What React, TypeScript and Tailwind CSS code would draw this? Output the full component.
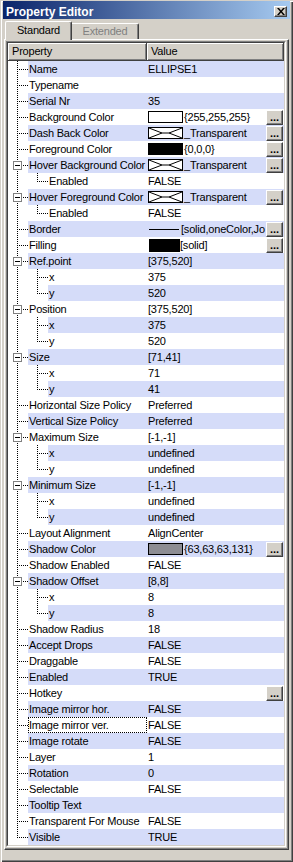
import React from "react";

type Kind = "white" | "black" | "none" | "line" | "fill" | "shadow";

type Item = {
  label: string;
  value?: string;
  child?: boolean;
  last?: boolean;
  expand?: boolean;
  swatch?: Kind;
  btn?: boolean;
  focus?: boolean;
};

const items: Item[] = [
  { label: "Name", value: "ELLIPSE1" },
  { label: "Typename", value: "" },
  { label: "Serial Nr", value: "35" },
  { label: "Background Color", swatch: "white", value: "{255,255,255}", btn: true },
  { label: "Dash Back Color", swatch: "none", value: "_Transparent", btn: true },
  { label: "Foreground Color", swatch: "black", value: "{0,0,0}", btn: true },
  { label: "Hover Background Color", swatch: "none", value: "_Transparent", btn: true, expand: true },
  { label: "Enabled", value: "FALSE", child: true, last: true },
  { label: "Hover Foreground Color", swatch: "none", value: "_Transparent", btn: true, expand: true },
  { label: "Enabled", value: "FALSE", child: true, last: true },
  { label: "Border", swatch: "line", value: "[solid,oneColor,Jo", btn: true },
  { label: "Filling", swatch: "fill", value: "[solid]", btn: true },
  { label: "Ref.point", value: "[375,520]", expand: true },
  { label: "x", value: "375", child: true },
  { label: "y", value: "520", child: true, last: true },
  { label: "Position", value: "[375,520]", expand: true },
  { label: "x", value: "375", child: true },
  { label: "y", value: "520", child: true, last: true },
  { label: "Size", value: "[71,41]", expand: true },
  { label: "x", value: "71", child: true },
  { label: "y", value: "41", child: true, last: true },
  { label: "Horizontal Size Policy", value: "Preferred" },
  { label: "Vertical Size Policy", value: "Preferred" },
  { label: "Maximum Size", value: "[-1,-1]", expand: true },
  { label: "x", value: "undefined", child: true },
  { label: "y", value: "undefined", child: true, last: true },
  { label: "Minimum Size", value: "[-1,-1]", expand: true },
  { label: "x", value: "undefined", child: true },
  { label: "y", value: "undefined", child: true, last: true },
  { label: "Layout Alignment", value: "AlignCenter" },
  { label: "Shadow Color", swatch: "shadow", value: "{63,63,63,131}", btn: true },
  { label: "Shadow Enabled", value: "FALSE" },
  { label: "Shadow Offset", value: "[8,8]", expand: true },
  { label: "x", value: "8", child: true },
  { label: "y", value: "8", child: true, last: true },
  { label: "Shadow Radius", value: "18" },
  { label: "Accept Drops", value: "FALSE" },
  { label: "Draggable", value: "FALSE" },
  { label: "Enabled", value: "TRUE" },
  { label: "Hotkey", value: "", btn: true },
  { label: "Image mirror hor.", value: "FALSE" },
  { label: "Image mirror ver.", value: "FALSE", focus: true },
  { label: "Image rotate", value: "FALSE" },
  { label: "Layer", value: "1" },
  { label: "Rotation", value: "0" },
  { label: "Selectable", value: "FALSE" },
  { label: "Tooltip Text", value: "" },
  { label: "Transparent For Mouse", value: "FALSE" },
  { label: "Visible", value: "TRUE" },
];

// dotted tree lines + expand box for one row
function Lines({ item, lastRow }: { item: Item; lastRow: boolean }) {
  const w = item.child ? 40 : 20;
  return (
    <svg width={w} height={16} className="block shrink-0" shapeRendering="crispEdges">
      <line x1={9.5} y1={0} x2={9.5} y2={lastRow ? 9 : 16} stroke="#000" strokeDasharray="1 1" />
      {item.child ? (
        <>
          <line x1={29.5} y1={0} x2={29.5} y2={item.last ? 9 : 16} stroke="#000" strokeDasharray="1 1" />
          <line x1={31} y1={8.5} x2={40} y2={8.5} stroke="#000" strokeDasharray="1 1" />
        </>
      ) : (
        <line x1={11} y1={8.5} x2={20} y2={8.5} stroke="#000" strokeDasharray="1 1" />
      )}
      {item.expand && (
        <>
          <rect x={5.5} y={4.5} width={8} height={8} fill="#fff" stroke="#808080" />
          <line x1={7} y1={8.5} x2={12} y2={8.5} stroke="#000" />
        </>
      )}
    </svg>
  );
}

function Swatch({ kind }: { kind: Kind }) {
  if (kind === "white") return <div className="ml-[1px] w-[35px] h-[12px] shrink-0 border border-black bg-white" />;
  if (kind === "black") return <div className="ml-[1px] w-[35px] h-[12px] shrink-0 border border-black bg-black" />;
  if (kind === "shadow") return <div className="ml-[1px] w-[35px] h-[12px] shrink-0 border border-black bg-[#8d8d93]" />;
  if (kind === "line") return <div className="ml-[2px] w-[30px] h-[1px] shrink-0 bg-black" />;
  if (kind === "fill") return <div className="ml-[2px] w-[31px] h-[13px] shrink-0 bg-black" />;
  return (
    <svg width={35} height={12} className="ml-[1px] block shrink-0">
      <rect x={0.5} y={0.5} width={34} height={11} fill="#fff" stroke="#000" />
      <polyline points="1,1 14,6 1,11" fill="none" stroke="#000" />
      <polyline points="34,1 21,6 34,11" fill="none" stroke="#000" />
      <line x1={14} y1={6} x2={21} y2={6} stroke="#000" />
    </svg>
  );
}

function DotsButton() {
  return (
    <div className="self-start mt-[1px] mr-[1px] shrink-0 w-[17px] h-[15px] bg-[#d4d0c8] border border-t-white border-l-white border-r-[#404040] border-b-[#404040] shadow-[inset_-1px_-1px_0_#808080] flex items-center justify-center text-[11px] leading-none font-bold tracking-normal">
      ...
    </div>
  );
}

function PropRow({ item, index }: { item: Item; index: number }) {
  const hl = index % 2 === 0 ? "bg-[#d5dcf9]" : "bg-white";
  const textPad = item.swatch === "line" ? "pl-[2px]" : item.swatch === "fill" ? "pl-0" : "pl-[1px]";
  return (
    <div className="flex h-[16px] leading-[16px]">
      <Lines item={item} lastRow={index === items.length - 1} />
      <div
        className={`${item.child ? "w-[99px]" : "w-[119px]"} shrink-0 overflow-hidden whitespace-nowrap ${hl} ${
          item.focus ? "border border-dotted border-black leading-[14px]" : "pl-[1px]"
        }`}
      >
        {item.label}
      </div>
      <div className={`w-[137px] shrink-0 flex items-center ${hl}`}>
        <div className="flex-1 min-w-0 flex items-center overflow-hidden whitespace-nowrap">
          {item.swatch && <Swatch kind={item.swatch} />}
          <span className={textPad}>{item.value}</span>
        </div>
        {item.btn && <DotsButton />}
      </div>
    </div>
  );
}

export default function App() {
  return (
    <div className="w-[293px] h-[862px] bg-[#d4d0c8] pt-[1px] px-[3px] flex flex-col font-['Liberation_Sans',Arial,sans-serif] text-[11px] tracking-[-0.2px] text-black shadow-[inset_1px_1px_0_#d4d0c8,inset_2px_2px_0_#ffffff,inset_-1px_-1px_0_#404040,inset_-2px_-2px_0_#808080]">
      {/* title bar */}
      <div className="h-[18px] shrink-0 flex items-start bg-[linear-gradient(to_right,#0a246a,#a6caf0)]">
        <span className="pl-[3px] pt-[4px] text-[12px] leading-[14px] font-bold tracking-normal text-white">Property Editor</span>
        <div className="ml-auto mr-[3px] mt-[5px] w-[13px] h-[11px] bg-[#d4d0c8] border border-t-white border-l-white border-r-[#404040] border-b-[#404040] shadow-[inset_-1px_-1px_0_#808080] flex items-center justify-center">
          <svg width={8} height={7} viewBox="0 0 8 7">
            <path d="M0 0h2l2 2.5L6 0h2L5 3.5 8 7H6L4 4.5 2 7H0l3-3.5z" fill="#000" />
          </svg>
        </div>
      </div>

      <div className="mx-[1px] flex flex-col">
        {/* tabs */}
        <div className="h-[20px] shrink-0 flex items-end">
          <div className="relative z-10 ml-[1px] -mb-[1px] h-[19px] w-[67px] bg-[#d4d0c8] border-t border-l border-white border-r border-r-[#404040] rounded-t-[2px] shadow-[inset_-1px_0_0_#808080] text-center pt-[2px] leading-[13px]">
            Standard
          </div>
          <div className="h-[16px] w-[67px] bg-[#d4d0c8] border-t border-white border-r border-r-[#404040] rounded-tr-[2px] shadow-[inset_-1px_0_0_#808080] text-center pt-[1px] leading-[13px] text-[#808080]">
            Extended
          </div>
        </div>

        {/* tab page */}
        <div className="border-t border-l border-white border-r border-b border-r-[#404040] border-b-[#404040]">
          <div className="border-r border-b border-[#808080] p-[1px]">
            {/* sunken tree */}
            <div className="border border-t-[#808080] border-l-[#808080] border-r-white border-b-white">
              <div className="border border-t-[#404040] border-l-[#404040] border-r-[#d4d0c8] border-b-[#d4d0c8] bg-white">
                <div className="flex h-[18px] bg-[#d4d0c8]">
                  <div className="w-[139px] shrink-0 border-r border-b border-[#404040] shadow-[inset_1px_1px_0_#fff,inset_-1px_-1px_0_#808080] pl-[4px] pt-[2px] leading-[13px]">
                    Property
                  </div>
                  <div className="flex-1 border-r border-b border-[#404040] shadow-[inset_1px_1px_0_#fff,inset_-1px_-1px_0_#808080] pl-[4px] pt-[2px] leading-[13px]">
                    Value
                  </div>
                </div>
                {items.map((item, i) => (
                  <PropRow key={i} item={item} index={i} />
                ))}
              </div>
            </div>
          </div>
        </div>
      </div>
    </div>
  );
}
